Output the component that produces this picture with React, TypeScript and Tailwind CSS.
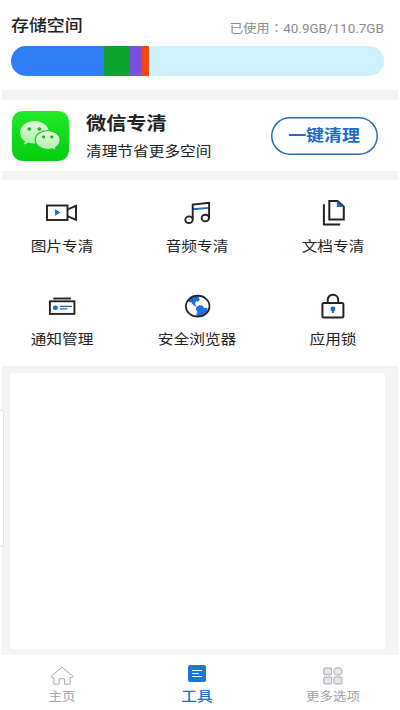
import React from 'react';
import type { ReactNode } from 'react';
import clsx from 'clsx';

const STORAGE = [
  { id: 'apps', className: 'w-[92.5px] bg-[#2f7df6]' },
  { id: 'images', className: 'w-[26.5px] bg-[#0fa430]' },
  { id: 'video', className: 'w-[11px] bg-[#7b4fe0]' },
  { id: 'other', className: 'w-[8px] bg-[#f4440f]' },
];

// Labels are drawn slightly wider than their font height.
function Label({ children, className }: { children: ReactNode; className?: string }) {
  return (
    <span className={clsx('block w-max scale-x-[1.12] whitespace-nowrap', className)}>{children}</span>
  );
}

function WeChatLogo() {
  return (
    <svg width="57" height="50" viewBox="0 0 57 50">
      <defs>
        <linearGradient id="tile" x1="0" y1="0" x2="0" y2="1">
          <stop offset="0" stopColor="#20ea28" />
          <stop offset="1" stopColor="#05cd10" />
        </linearGradient>
        <linearGradient id="bubble" x1="0" y1="0" x2="0" y2="1">
          <stop offset="0" stopColor="#e4fbdf" />
          <stop offset="1" stopColor="#a9f0a4" />
        </linearGradient>
      </defs>
      <rect width="57" height="50" rx="10.5" fill="url(#tile)" />
      <path
        d="M22.500 10C14.500 10 8 15.100 8 21.600c0 3.600 2 6.700 5 8.800l-1.200 3.400 4.600-2.300c2 .6 4 .9 6.100.9C30.500 32.400 37 28 37 21.600S30.500 10 22.500 10z"
        fill="url(#bubble)"
      />
      <ellipse cx="17.200" cy="18" rx="1.900" ry="1.700" fill="#22a62a" />
      <ellipse cx="27.400" cy="18" rx="1.900" ry="1.700" fill="#22a62a" />
      <path
        d="M35.700 19.500c-7 0-12.500 4.200-12.500 9.500s5.500 9.500 12.500 9.500c1.600 0 3.200-.2 4.600-.7l4.200 2-1-3c2.900-1.800 4.700-4.600 4.700-7.800 0-5.300-5.500-9.500-12.500-9.500z"
        fill="url(#bubble)"
        stroke="#12c91c"
        strokeWidth="1.200"
      />
      <ellipse cx="31.500" cy="26" rx="1.600" ry="1.400" fill="#22a62a" />
      <ellipse cx="39.800" cy="26" rx="1.600" ry="1.400" fill="#22a62a" />
    </svg>
  );
}

function VideoIcon() {
  return (
    <svg width="36" height="28" viewBox="0 0 36 28" fill="none" stroke="#222" strokeWidth="1.900">
      <rect x="3" y="6.500" width="20.500" height="14.500" />
      <path d="M23.500 10.500l8.500-3.700v14l-8.500-3.700" />
      <path d="M11 10.200l5.500 3.300-5.500 3.300z" fill="#1c69c8" stroke="none" />
    </svg>
  );
}

function MusicIcon() {
  return (
    <svg width="36" height="28" viewBox="0 0 36 28" fill="none" stroke="#222" strokeWidth="1.900">
      <path d="M13.500 10.200l16-1.300" stroke="#1c69c8" />
      <path d="M13.700 20.500V5.600l16.400-1.700v15" />
      <ellipse cx="10" cy="20.700" rx="3.700" ry="3.300" />
      <ellipse cx="26.300" cy="19" rx="3.700" ry="3.300" />
    </svg>
  );
}

function DocsIcon() {
  return (
    <svg width="36" height="28" viewBox="0 0 36 28" fill="none" stroke="#222" strokeWidth="2">
      <path d="M8.900 5.200v20.200h16.300" />
      <path d="M14.300 2h8.200l6.300 5.600v13H14.300z" />
      <path d="M21.800 1.800v6.300h7z" fill="#1c69c8" stroke="none" />
    </svg>
  );
}

function NoticeIcon() {
  return (
    <svg width="36" height="28" viewBox="0 0 36 28" fill="none" stroke="#222" strokeWidth="1.900">
      <path d="M9.300 6.500h17.600" />
      <rect x="5.900" y="9.300" width="24.500" height="12.600" />
      <ellipse cx="11.400" cy="15.700" rx="2.500" ry="2.200" fill="#1c69c8" stroke="none" />
      <path d="M16 14.300h12M16 16.800h7.200" stroke="#1c69c8" strokeWidth="1.200" />
    </svg>
  );
}

function GlobeIcon() {
  return (
    <svg width="36" height="28" viewBox="0 0 36 28" fill="none">
      <path
        d="M8.700 9c1.900-3.300 5.300-5.200 9.300-5.400l2.300.2-.5 2.300 1 1.600-1.500 2-2.100-.6-.7 1.500-.6 1.500 1.500 1.200-1.300 1.200-2.200-1.900-1.800-2.400-2.500-.4zM17.300 15l3.300-2 3 .7 1.200 2 3.400.4.600 2.400c-1.200 2.900-4 5-7.500 5.800l-3.600.4-.6-2.200 1.500-2.600-1.800-2.300z"
        fill="#1f6fdc"
      />
      <ellipse cx="18.700" cy="14.200" rx="11.800" ry="10.500" stroke="#222" strokeWidth="1.700" />
    </svg>
  );
}

function LockIcon() {
  return (
    <svg width="36" height="28" viewBox="0 0 36 28" fill="none" stroke="#222" strokeWidth="2">
      <rect x="7.400" y="11" width="21" height="14.400" rx="1.500" />
      <path d="M12.700 11V8c0-3.100 2.100-5.200 5.200-5.200s5.300 2.100 5.300 5.200v3" />
      <g fill="#1c69c8" stroke="none">
        <circle cx="17.900" cy="17" r="2.400" />
        <path d="M16.900 17.500h2V21h-2z" />
      </g>
    </svg>
  );
}

const TOOLS = [
  { label: '图片专清', icon: <VideoIcon /> },
  { label: '音频专清', icon: <MusicIcon /> },
  { label: '文档专清', icon: <DocsIcon /> },
  { label: '通知管理', icon: <NoticeIcon /> },
  { label: '安全浏览器', icon: <GlobeIcon /> },
  { label: '应用锁', icon: <LockIcon /> },
];

function HomeIcon() {
  return (
    <svg width="24" height="20" viewBox="0 0 24 20" fill="none" stroke="#a6a8ab" strokeWidth="1">
      <path
        d="M12 1.200L1 10.300l.8 1.200h2v6.700h5.400v-5.400h5.400v5.400h5.600v-6.700h2l.8-1.200z"
        strokeLinejoin="round"
      />
    </svg>
  );
}

function ToolsIcon() {
  return (
    <svg width="18" height="17" viewBox="0 0 18 17">
      <rect width="18" height="17" rx="2" fill="#1c76d6" />
      <path d="M4 5.500h10M4 8.500h7M4 11.500h10" stroke="#fff" strokeWidth="1.100" />
    </svg>
  );
}

function MoreIcon() {
  return (
    <svg width="20" height="18" viewBox="0 0 20 18" fill="#e3e6ea" stroke="#a6a8ab">
      <rect x=".8" y="1" width="7.900" height="6.700" rx=".8" />
      <ellipse cx="15" cy="4.400" rx="4.100" ry="3.700" />
      <rect x=".8" y="10" width="7.900" height="6.900" rx=".8" />
      <rect x="11" y="10" width="7.900" height="6.900" rx=".8" />
    </svg>
  );
}

export default function App() {
  return (
    <div className="flex h-[710px] w-[400px] flex-col overflow-hidden bg-white font-['Roboto','Noto_Sans_CJK_SC',sans-serif] text-[#222]">
      <header className="h-[90px] pl-[11px] pr-4 pt-[14px]">
        <div className="flex h-6 items-start justify-between">
          <Label className="origin-left text-[16px] font-medium leading-6">存储空间</Label>
          <Label className="origin-right pt-[4px] text-[12px] leading-5 text-[#8c8c8c]">
            已使用<span className="font-['Noto_Sans_CJK_TC',sans-serif]">：</span>40.9GB/110.7GB
          </Label>
        </div>
        <div className="mt-2 flex h-[30px] w-[373px] overflow-hidden rounded-full bg-[#cdf1fd]">
          {STORAGE.map((s) => (
            <div key={s.id} className={s.className} />
          ))}
        </div>
      </header>

      <div className="mx-[2px] h-[10px] bg-[#f4f4f4]" />

      <section className="flex h-[71px] items-center pl-3 pr-[22px]">
        <WeChatLogo />
        <div className="ml-[17px] flex-1 pt-[3px]">
          <Label className="origin-left text-[18px] font-bold leading-[26px]">微信专清</Label>
          <Label className="mt-[2px] origin-left text-[14px] leading-6">清理节省更多空间</Label>
        </div>
        <button className="flex h-[38px] w-[107px] items-center justify-center rounded-full text-[#1c69c8] shadow-[inset_0_0_0_1.5px_#2a69b8]">
          <Label className="text-[16px] font-bold leading-6">一键清理</Label>
        </button>
      </section>

      <div className="mx-[2px] h-[9px] bg-[#f4f4f4]" />

      <section className="-ml-[6px] grid h-[186px] w-[407px] grid-cols-3 grid-rows-[93px_93px] pt-[19px]">
        {TOOLS.map((t) => (
          <div key={t.label} className="flex flex-col items-center">
            {t.icon}
            <Label className="mt-[7px] text-[14px] leading-6">{t.label}</Label>
          </div>
        ))}
      </section>

      <div className="relative mx-[2px] h-[289px] bg-[#f4f4f4] pb-[6px] pl-2 pr-[13px] pt-[7px]">
        <div className="h-full rounded-[3px] bg-white" />
        <div className="absolute -left-[5px] top-[43px] h-[138px] w-[7px] rounded-r border border-[#e2e2e2] bg-white" />
      </div>

      <nav className="-ml-[6px] grid h-[55px] w-[407px] grid-cols-3 text-[#a0a2a5]">
        <div className="flex flex-col items-center pt-[11px]">
          <HomeIcon />
          <Label className="mt-[1px] text-[12px] leading-5">主页</Label>
        </div>
        <div className="flex flex-col items-center pt-[10px] text-[#1c70c8]">
          <ToolsIcon />
          <Label className="mt-[2px] text-[14px] font-medium leading-6">工具</Label>
        </div>
        <div className="flex flex-col items-center pt-3">
          <MoreIcon />
          <Label className="mt-[2px] text-[12px] leading-5">更多选项</Label>
        </div>
      </nav>
    </div>
  );
}
